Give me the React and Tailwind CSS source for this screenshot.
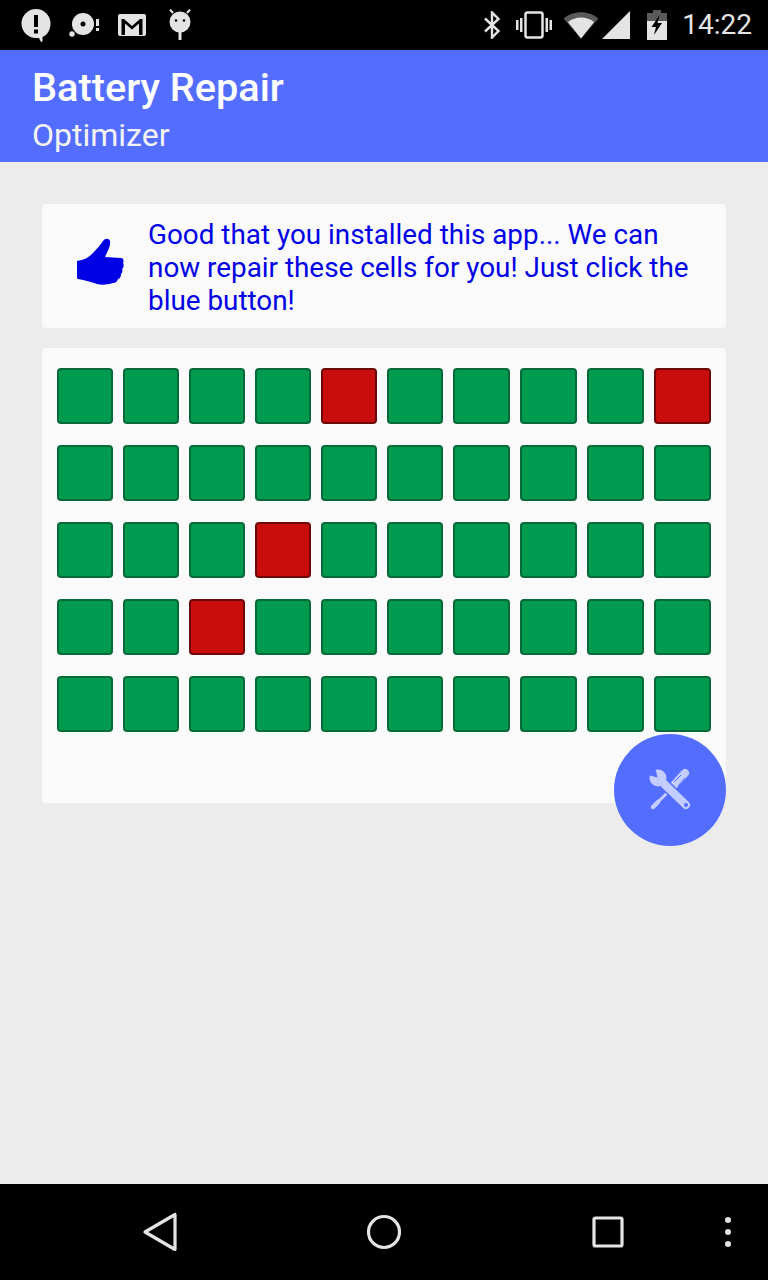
import React from 'react';

const RED = new Set([4, 9, 23, 32]);
const cells = Array.from({ length: 50 }, (_, i) => i);

const StatusLeft = () => (
  <div className="flex items-center">
    <svg className="ml-[20px] w-[32px] h-[36px]" viewBox="0 0 32 36">
      <path d="M16 2a14.500 14.500 0 1 0 0 29h3l2 4 1.500-.5 0-4.500C27.500 28 30.500 22.500 30.500 16.500A14.500 14.500 0 0 0 16 2z" fill="#e4e4e4" />
      <rect x="14" y="8" width="4" height="12" fill="#000" />
      <rect x="14" y="22.500" width="4" height="4" fill="#000" />
    </svg>
    <svg className="ml-[16px] w-[32px] h-[32px]" viewBox="0 0 32 32">
      <circle cx="15" cy="15" r="11" fill="#e4e4e4" />
      <circle cx="15" cy="15" r="2.500" fill="#000" />
      <circle cx="4" cy="25" r="2.700" fill="#e4e4e4" />
      <rect x="28" y="10" width="3" height="7" fill="#e4e4e4" />
      <rect x="28" y="19" width="3" height="3" fill="#e4e4e4" />
    </svg>
    <svg className="ml-[17px] w-[30px] h-[24px]" viewBox="0 0 30 24">
      <rect x="1" y="1" width="28" height="22" rx="2" fill="#e4e4e4" />
      <path d="M4.500 22V6h2.500l8 7 8-7h2.500v16h-3.500V10.500l-7 6-7-6V22z" fill="#000" />
    </svg>
    <svg className="ml-[21px] w-[24px] h-[32px]" viewBox="0 0 24 32">
      <circle cx="12" cy="13" r="10.500" fill="#e4e4e4" />
      <path d="M5 4 2 0.500M19 4l3-3.500" stroke="#e4e4e4" strokeWidth="2" />
      <circle cx="8" cy="11.500" r="1.300" fill="#000" />
      <circle cx="16" cy="11.500" r="1.300" fill="#000" />
      <rect x="10.500" y="23" width="3" height="8" fill="#e4e4e4" />
    </svg>
  </div>
);

const StatusRight = () => (
  <div className="flex items-center">
    <svg className="w-[18px] h-[28px]" viewBox="0 0 18 28">
      <path d="M2 7.500 15.500 20 9 26.500V1.500L15.500 8 2 20.500" fill="none" stroke="#e4e4e4" strokeWidth="2.400" />
    </svg>
    <svg className="ml-[14px] w-[38px] h-[28px]" viewBox="0 0 38 28">
      <rect x="10.500" y="1.500" width="17" height="25" rx="2" fill="none" stroke="#e4e4e4" strokeWidth="2.500" />
      <path d="M1 9h2.500v10H1zM5 7h2.500v14H5zM30.500 7H33v14h-2.500zM34.500 9H37v10h-2.500z" fill="#e4e4e4" />
    </svg>
    <svg className="ml-[10px] w-[36px] h-[28px]" viewBox="0 0 36 28">
      <path d="M0.500 7.500C10-1 26-1 35.500 7.500L18 27.500z" fill="#5a5a5a" />
      <path d="M5 11C12 5 24 5 31 11L18 27.500z" fill="#e4e4e4" />
    </svg>
    <svg className="ml-[3px] w-[28px] h-[28px]" viewBox="0 0 28 28">
      <path d="M28 0v28H0z" fill="#e4e4e4" />
    </svg>
    <svg className="ml-[17px] w-[20px] h-[30px]" viewBox="0 0 20 30">
      <path d="M6 0h8v3h6v8H0V3h6z" fill="#5a5a5a" />
      <path d="M0 11h20v19H0z" fill="#e4e4e4" />
      <path d="M12.500 5 4.500 17h4.500l-2 8 8-12H10.500z" fill="#000" />
    </svg>
    <span className="ml-[15px] mr-[16px] text-[28px] leading-none text-[#e4e4e4]">14:22</span>
  </div>
);

const ThumbIcon = () => (
  <svg className="w-[47px] h-[47px] shrink-0 mb-[9px]" viewBox="0 0 47 47">
    <path
      d="M0 23C7 22 11 20 16 15C20 11 24 6 26 3C28 0 32 0 33 3C34 7 31 12 28 19L44 20C47 20 47 24 46 25C47 26 47 30 45 31C46 33 45 35 44 36C44 38 43 41 41 41C40 44 38 45 36 45C30 47 24 47 20 46C14 44 8 42 1 41C0 41 0 40 0 39Z"
      fill="#0000e6"
    />
  </svg>
);

const ToolsIcon = () => (
  <svg className="w-[52px] h-[52px]" viewBox="0 0 52 52">
    {/* screwdriver */}
    <path d="M30 21 41 9" stroke="#c3cdff" strokeWidth="8" strokeLinecap="round" />
    <path d="M30 18 37 11M34 22 41 14" stroke="#536dfe" strokeWidth="1" />
    <path d="M25 27 12 40" stroke="#c3cdff" strokeWidth="3" />
    <path d="M14 38 9 43" stroke="#c3cdff" strokeWidth="4.500" strokeLinecap="round" />
    {/* wrench */}
    <path d="M14 14 42 41" stroke="#536dfe" strokeWidth="11" />
    <path d="M14 14 42 41" stroke="#c3cdff" strokeWidth="8" strokeLinecap="round" />
    <circle cx="14" cy="14" r="8.500" fill="#c3cdff" />
    <path d="M13.500 13.500 4 11 11 3z" fill="#536dfe" />
    <circle cx="42" cy="41" r="2" fill="#536dfe" />
  </svg>
);

const NavBar = () => (
  <div className="h-[96px] bg-black relative flex items-center shrink-0">
    <div className="w-full flex items-center justify-between pl-[141px] pr-[143px]">
      <svg className="w-[36px] h-[40px]" viewBox="0 0 36 40">
        <path d="M34 2.500v35L4 20z" fill="none" stroke="#e4e4e4" strokeWidth="3.200" strokeLinejoin="round" />
      </svg>
      <svg className="w-[36px] h-[36px]" viewBox="0 0 36 36">
        <circle cx="18" cy="18" r="15.500" fill="none" stroke="#e4e4e4" strokeWidth="3.200" />
      </svg>
      <svg className="w-[34px] h-[34px]" viewBox="0 0 34 34">
        <rect x="3" y="3" width="28" height="28" rx="1.500" fill="none" stroke="#e4e4e4" strokeWidth="3.200" />
      </svg>
    </div>
    <div className="absolute right-[37px] top-[33px] flex flex-col gap-[6px]">
      <div className="w-[6px] h-[6px] rounded-full bg-[#e4e4e4]" />
      <div className="w-[6px] h-[6px] rounded-full bg-[#e4e4e4]" />
      <div className="w-[6px] h-[6px] rounded-full bg-[#e4e4e4]" />
    </div>
  </div>
);

export default function App() {
  return (
    <div className="w-[768px] h-[1280px] flex flex-col bg-[#ececec] overflow-hidden font-['Roboto',sans-serif]">
      <div className="h-[50px] bg-black flex items-center justify-between shrink-0">
        <StatusLeft />
        <StatusRight />
      </div>

      <div className="h-[112px] bg-[#536dfe] pl-[32px] pt-[15px] text-white shrink-0">
        <div className="text-[39.700px] leading-[46px] font-medium">Battery Repair</div>
        <div className="text-[32px] leading-[48px] text-[#f4f4f4]">Optimizer</div>
      </div>

      <div className="flex-1 px-[42px] pt-[42px]">
        <div className="h-[124px] bg-[#fafafa] rounded-[4px] flex items-center pl-[35px]">
          <ThumbIcon />
          <p className="ml-[24px] w-[560px] pt-[2px] text-[27.850px] leading-[33px] text-[#0000e6]">
            Good that you installed this app... We can now repair these cells for you! Just click the blue button!
          </p>
        </div>

        <div className="relative mt-[20px] h-[455px] bg-[#fafafa] rounded-[4px] px-[15px] pt-[20px]">
          <div className="grid grid-cols-[repeat(6,56px)_repeat(4,57px)] gap-x-[10px] gap-y-[21px]">
            {cells.map((i) => (
              <div
                key={i}
                className={
                  RED.has(i)
                    ? 'h-[56px] rounded-[4px] border-2 border-[#6e0808] bg-[#c90c0c]'
                    : 'h-[56px] rounded-[4px] border-2 border-[#05693a] bg-[#019b4f]'
                }
              />
            ))}
          </div>
          <div className="absolute right-0 top-[386px] w-[112px] h-[112px] rounded-full bg-[#536dfe] flex items-center justify-center">
            <ToolsIcon />
          </div>
        </div>
      </div>

      <NavBar />
    </div>
  );
}
